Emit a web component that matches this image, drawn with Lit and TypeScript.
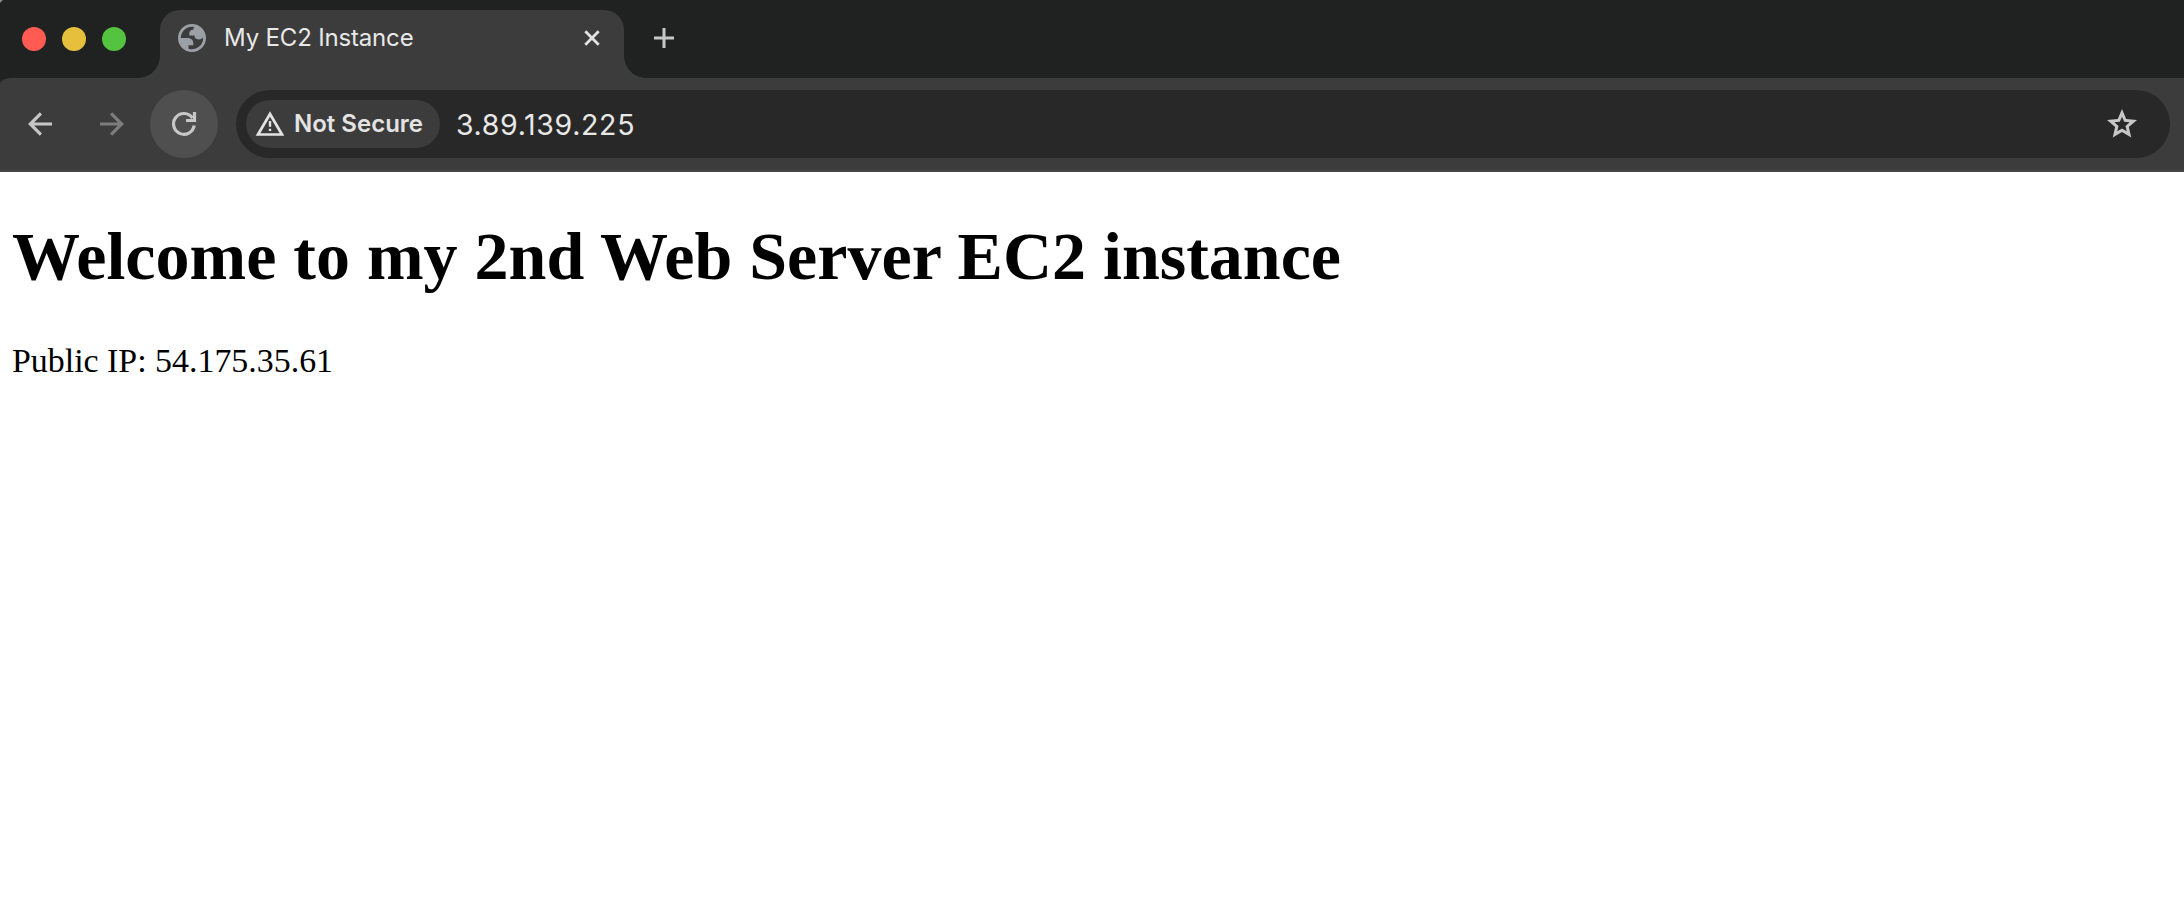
import { LitElement, html, css } from "lit";
import { customElement } from "lit/decorators.js";

@customElement("browser-tabs")
class BrowserTabs extends LitElement {
  static styles = css`
    :host { display: flex; height: 78px; background: linear-gradient(135deg, #8a8c8b 1.5px, #202221 2.5px); font-family: Inter, sans-serif; }
    .lights { display: flex; gap: 16px; width: 138px; padding: 27px 0 0 22px; box-sizing: border-box; }
    .light { width: 24px; height: 24px; border-radius: 50%; }
    .red { background: #ff5b52; }
    .yellow { background: #e6c03d; }
    .green { background: #54c33f; }
    .flare { width: 22px; height: 22px; align-self: flex-end; flex: none; }
    .left { background: radial-gradient(circle at 0 0, transparent 21.5px, #3c3c3c 22.3px); }
    .right { background: radial-gradient(circle at 100% 0, transparent 21.5px, #3c3c3c 22.3px); }
    .tab { width: 464px; height: 68px; margin-top: 10px; box-sizing: border-box; padding: 0 20px 12px 14px; display: flex; align-items: center; background: #3c3c3c; border-radius: 20px 20px 0 0; }
    .globe { width: 36px; height: 36px; color: #9aa0a6; }
    .title { flex: 1; margin-left: 14px; font-size: 24px; line-height: 30px; letter-spacing: -0.17px; color: #e8e8e8; white-space: nowrap; }
    .close { width: 24px; height: 24px; }
    .plus { width: 20px; height: 20px; margin: 28px 0 0 8px; }
  `;
  render() {
    return html`
      <div class="lights"><div class="light red"></div><div class="light yellow"></div><div class="light green"></div></div>
      <div class="flare left"></div>
      <div class="tab">
        <svg class="globe" viewBox="-0.857 -0.857 25.714 25.714"><path fill="currentColor" fill-rule="evenodd" d="M12 2C6.480 2 2 6.480 2 12s4.480 10 10 10 10-4.480 10-10S17.520 2 12 2zM4 12h4.400c3.407.022 4.922 1.730 4.543 5.127H9.488v2.470a8.004 8.004 0 0 0 10.498-8.083C19.327 12.504 18.332 13 17 13c-2.137 0-3.206-.916-3.206-2.750h-3.748c-.274-2.728.683-4.092 2.870-4.092 0-.975.327-1.597.811-1.970A8.004 8.004 0 0 0 4 12z"/></svg>
        <span class="title">My EC2 Instance</span>
        <svg class="close" viewBox="0 0 24 24"><path d="M5.300 5.300 18.700 18.700M18.700 5.300 5.300 18.700" stroke="#e3e3e3" stroke-width="2.800"/></svg>
      </div>
      <div class="flare right"></div>
      <svg class="plus" viewBox="0 0 20 20"><path d="M10 0V20M0 10H20" stroke="#c7c7c7" stroke-width="3"/></svg>
    `;
  }
}

@customElement("browser-toolbar")
class BrowserToolbar extends LitElement {
  static styles = css`
    :host { display: block; background: #202221; font-family: Inter, sans-serif; }
    .bar { display: flex; height: 94px; box-sizing: border-box; padding: 12px 14px 12px 6px; background: linear-gradient(#3c3c3c 92px, #474747 92px); border-top-left-radius: 12px 6px; }
    .button { width: 68px; height: 68px; margin-right: 4px; display: grid; place-items: center; border-radius: 50%; flex: none; }
    .reload { background: #4f4f4f; margin-right: 18px; }
    .icon { width: 36px; height: 36px; display: block; }
    .address { flex: 1; display: flex; align-items: center; height: 68px; background: #282828; border-radius: 34px; padding: 0 30px 0 10px; box-sizing: border-box; }
    .chip { width: 194px; height: 48px; box-sizing: border-box; display: flex; align-items: center; background: #3c3c3c; border-radius: 24px; padding-left: 8px; color: #e3e3e3; font-size: 24px; font-weight: 600; white-space: nowrap; }
    .label { padding-bottom: 2px; }
    .warning { width: 32px; height: 32px; margin-right: 8px; flex: none; }
    .url { flex: 1; margin-left: 16px; font-size: 28.5px; letter-spacing: 0.65px; color: #e8e8e8; }
  `;
  render() {
    return html`
      <div class="bar">
        <div class="button"><svg class="icon" viewBox="0 0 36 36"><path d="M30 18H9M18.900 7.400 8.300 18 18.900 28.600" fill="none" stroke="#c7c7c7" stroke-width="3.200"/></svg></div>
        <div class="button"><svg class="icon" viewBox="0 0 36 36"><path d="M6 18H27M17.100 7.400 27.700 18 17.100 28.600" fill="none" stroke="#7d7d7d" stroke-width="3.200"/></svg></div>
        <div class="button reload"><svg class="icon" viewBox="0 0 36 36"><path d="M28.200 19.500A10.400 10.400 0 1 1 26.500 12" fill="none" stroke="#c7c7c7" stroke-width="3.200"/><path d="M28.500 6V14.500H20" fill="none" stroke="#c7c7c7" stroke-width="3.200"/></svg></div>
        <div class="address">
          <div class="chip">
            <svg class="warning" viewBox="0 0 32 32"><path d="M16 6 28 26.500H4z" fill="none" stroke="#e3e3e3" stroke-width="2.700"/><path d="M16 13v5.700M16 20.700v2.300" stroke="#e3e3e3" stroke-width="2.400"/></svg>
            <span class="label">Not Secure</span>
          </div>
          <span class="url">3.89.139.225</span>
          <svg class="icon" viewBox="0 0 24 24"><path fill="#c7c7c7" d="m8.850 16.825 3.150-1.900 3.150 1.925-.825-3.600 2.775-2.400-3.650-.325-1.450-3.400-1.450 3.375-3.650.325 2.775 2.425zM5.825 21l1.625-7.025L2 9.250l7.200-.625L12 2l2.800 6.625 7.200.625-5.450 4.725L18.175 21 12 17.275z"/></svg>
        </div>
      </div>
    `;
  }
}

@customElement("app-root")
class AppRoot extends LitElement {
  static styles = css`
    :host { display: block; min-height: 924px; background: #fff; color: #000; font-family: "Liberation Serif", serif; }
    .page { padding: 45px 12px 0; }
    h1 { margin: 0; font-size: 68px; line-height: 78px; white-space: nowrap; }
    p { margin: 47px 0 0; font-size: 33.9px; line-height: 38px; }
  `;
  render() {
    return html`
      <browser-tabs></browser-tabs>
      <browser-toolbar></browser-toolbar>
      <main class="page">
        <h1>Welcome to my 2nd Web Server EC2 instance</h1>
        <p>Public IP: 54.175.35.61</p>
      </main>
    `;
  }
}
